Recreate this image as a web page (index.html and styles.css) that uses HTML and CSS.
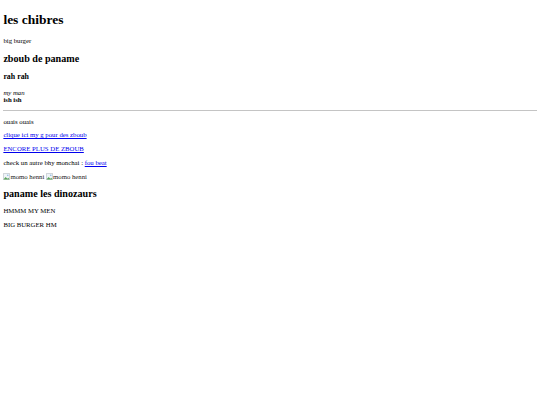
FILE: index.html
```html
<!DOCTYPE html>
<html lang="fr">
<head>
  <meta charset="UTF-8" />
  <title>les chibres</title>
  <link rel="stylesheet" href="styles.css">
</head>
<body>

  <h1>les chibres</h1>
  <p>big burger</p>

  <h2>zboub de paname</h2>
  <h3>rah rah</h3>

  <p class="signature"><em>my man</em><br><strong>ish ish</strong></p>

  <hr>

  <p>ouais ouais</p>
  <p><a href="#">clique ici my g pour des zboub</a></p>
  <p><a href="#">ENCORE PLUS DE ZBOUB</a></p>
  <p>check un autre bhy monchai : <a href="#">fou beat</a></p>

  <p class="pics">
    <span class="broken"><svg class="broken-icon" viewBox="0 0 16 16" width="7" height="7"><path d="M1 1h14v14H1z" fill="#eef3f7" stroke="#9aa4ad" stroke-width="1"/><path d="M1 15l5-6 4 4 2-2 3 4z" fill="#5aa35a"/><circle cx="11" cy="5" r="1.6" fill="#7ab0e0"/></svg>momo henni</span>
    <span class="broken"><svg class="broken-icon" viewBox="0 0 16 16" width="7" height="7"><path d="M1 1h14v14H1z" fill="#eef3f7" stroke="#9aa4ad" stroke-width="1"/><path d="M1 15l5-6 4 4 2-2 3 4z" fill="#5aa35a"/><circle cx="11" cy="5" r="1.6" fill="#7ab0e0"/></svg>momo henni</span>
  </p>

  <h2>paname les dinozaurs</h2>
  <p>HMMM MY MEN</p>
  <p>BIG BURGER HM</p>

</body>
</html>
```

FILE: styles.css
```css
/* page rendue a 0.42 de la taille normale */
html {
  font-family: "Liberation Serif", "Times New Roman", serif;
}

body {
  margin: 3.375px;
  font-size: 6.75px;
  color: #000;
  background: #fff;
}

h1 {
  font-size: 2em;
  margin: 0.67em 0;
}

h2 {
  font-size: 1.5em;
  margin: 0.83em 0;
}

h3 {
  font-size: 1.17em;
  margin: 1em 0;
}

p {
  margin: 1em 0;
}

hr {
  margin: 0.5em 0;
  border: none;
  border-top: 1px solid #c4c4c4;
}

a {
  color: #0000ee;
}

.broken {
  display: inline-block;
  color: #222;
}

.broken-icon {
  vertical-align: -1px;
}
```
